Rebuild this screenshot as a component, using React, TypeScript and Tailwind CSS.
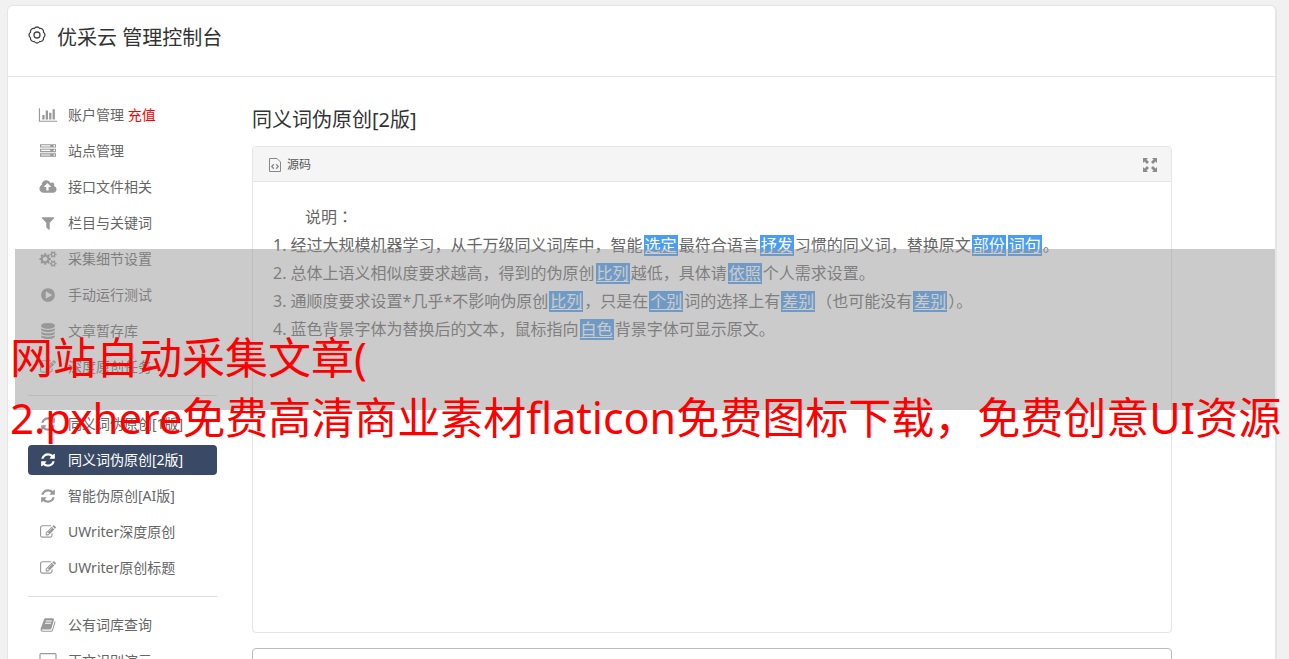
import React from "react";

type IconDef = { w: number; d: string };

const icons: Record<string, IconDef> = {
  chart: { w: 2048, d: "M640 896v512h-256v-512h256zm384-512v1024h-256v-1024h256zm1024 1152v128h-2048v-1536h128v1408h1920zm-640-896v768h-256v-768h256zm384-384v1152h-256v-1152h256z" },
  server: { w: 1792, d: "M128 1408h1024v-128h-1024v128zm0-512h1024v-128h-1024v128zm1568 448q0-40-28-68t-68-28-68 28-28 68 28 68 68 28 68-28 28-68zm-1568-960h1024v-128h-1024v128zm1568 448q0-40-28-68t-68-28-68 28-28 68 28 68 68 28 68-28 28-68zm0-512q0-40-28-68t-68-28-68 28-28 68 28 68 68 28 68-28 28-68zm96 832v384h-1792v-384h1792zm0-512v384h-1792v-384h1792zm0-512v384h-1792v-384h1792z" },
  cloud: { w: 1920, d: "M1280 864q0-14-9-23l-352-352q-9-9-23-9t-23 9l-351 351q-10 12-10 24 0 14 9 23t23 9h224v352q0 13 9.5 22.5t22.5 9.5h192q13 0 22.5-9.5t9.5-22.5v-352h224q13 0 22.5-9.5t9.5-22.5zm640 288q0 159-112.5 271.5t-271.5 112.5h-1088q-185 0-316.5-131.5t-131.5-316.5q0-130 70-240t188-165q-2-30-2-43 0-212 150-362t362-150q156 0 285.5 87t188.5 231q71-62 166-62 106 0 181 75t75 181q0 76-41 138 130 31 213.5 135.5t83.5 238.5z" },
  filter: { w: 1792, d: "M1595 295q17 41-14 70l-493 493v742q0 42-39 59-13 5-25 5-27 0-45-19l-256-256q-19-19-19-45v-486l-493-493q-31-29-14-70 17-39 59-39h1280q42 0 59 39z" },
  cogs: { w: 1920, d: "M896 896q0-106-75-181t-181-75-181 75-75 181 75 181 181 75 181-75 75-181zm768 512q0-52-38-90t-90-38-90 38-38 90q0 53 37.5 90.5t90.5 37.5 90.5-37.5 37.5-90.5zm0-1024q0-52-38-90t-90-38-90 38-38 90q0 53 37.5 90.5t90.5 37.5 90.5-37.5 37.5-90.5zm-384 421v185q0 10-7 19.5t-16 10.5l-155 24q-11 35-32 76 34 48 90 115 7 11 7 20 0 12-7 19-23 30-82.5 89.5t-78.5 59.5q-11 0-21-7l-115-90q-37 19-77 31-11 108-23 155-7 24-30 24h-186q-11 0-20-7.5t-10-17.5l-23-153q-34-10-75-31l-118 89q-7 7-20 7-11 0-21-8-144-133-144-160 0-9 7-19 10-14 41-53t47-61q-23-44-35-82l-152-24q-10-1-17-9.5t-7-19.5v-185q0-10 7-19.5t16-10.5l155-24q11-35 32-76-34-48-90-115-7-11-7-20 0-12 7-20 22-30 82-89t79-59q11 0 21 7l115 90q34-18 77-32 11-108 23-154 7-24 30-24h186q11 0 20 7.5t10 17.5l23 153q34 10 75 31l118-89q8-7 20-7 11 0 21 8 144 133 144 160 0 8-7 19-12 16-42 54t-45 60q23 48 34 82l152 23q10 2 17 10.5t7 19.5zm640 533v140q0 16-149 31-12 27-30 52 51 113 51 138 0 4-4 7-122 71-124 71-8 0-46-47t-52-68q-20 2-30 2t-30-2q-14 21-52 68t-46 47q-2 0-124-71-4-3-4-7 0-25 51-138-18-25-30-52-149-15-149-31v-140q0-16 149-31 13-29 30-52-51-113-51-138 0-4 4-7 4-2 35-20t59-34 30-16q8 0 46 46.5t52 67.5q20-2 30-2t30 2q51-71 92-112l6-2q4 0 124 70 4 3 4 7 0 25-51 138 17 23 30 52 149 15 149 31zm0-1024v140q0 16-149 31-12 27-30 52 51 113 51 138 0 4-4 7-122 71-124 71-8 0-46-47t-52-68q-20 2-30 2t-30-2q-14 21-52 68t-46 47q-2 0-124-71-4-3-4-7 0-25 51-138-18-25-30-52-149-15-149-31v-140q0-16 149-31 13-29 30-52-51-113-51-138 0-4 4-7 4-2 35-20t59-34 30-16q8 0 46 46.5t52 67.5q20-2 30-2t30 2q51-71 92-112l6-2q4 0 124 70 4 3 4 7 0 25-51 138 17 23 30 52 149 15 149 31z" },
  play: { w: 1792, d: "M896 128q209 0 385.5 103t279.5 279.5 103 385.5-103 385.5-279.5 279.5-385.5 103-385.5-103-279.5-279.5-103-385.5 103-385.5 279.5-279.5 385.5-103zm384 823q32-18 32-55t-32-55l-544-320q-31-19-64-1-32 19-32 56v640q0 37 32 56 16 8 32 8 17 0 32-9z" },
  database: { w: 1792, d: "M896 768q237 0 443-43t325-127v170q0 69-103 128t-280 93.5-385 34.5-385-34.5-280-93.5-103-128v-170q119 84 325 127t443 43zm0 768q237 0 443-43t325-127v170q0 69-103 128t-280 93.5-385 34.5-385-34.5-280-93.5-103-128v-170q119 84 325 127t443 43zm0-384q237 0 443-43t325-127v170q0 69-103 128t-280 93.5-385 34.5-385-34.5-280-93.5-103-128v-170q119 84 325 127t443 43zm0-1152q208 0 385 34.5t280 93.5 103 128v128q0 69-103 128t-280 93.5-385 34.5-385-34.5-280-93.5-103-128v-128q0-69 103-128t280-93.5 385-34.5z" },
  edit: { w: 1792, d: "M888 1184l116-116-152-152-116 116v56h96v96h56zm440-720q-16-16-33 1l-350 350q-17 17-1 33t33-1l350-350q17-17 1-33zm80 594v190q0 119-84.5 203.5t-203.5 84.5h-832q-119 0-203.5-84.5t-84.5-203.5v-832q0-119 84.5-203.5t203.5-84.5h832q63 0 117 25 15 7 18 23 3 17-9 29l-49 49q-14 14-32 8-23-6-45-6h-832q-66 0-113 47t-47 113v832q0 66 47 113t113 47h832q66 0 113-47t47-113v-126q0-13 9-22l64-64q15-15 35-7t20 29zm-96-738l288 288-672 672h-288v-288zm444 132l-92 92-288-288 92-92q28-28 68-28t68 28l152 152q28 28 28 68t-28 68z" },
  refresh: { w: 1792, d: "M1639 1056q0 5-1 7-64 268-268 434.5t-478 166.5q-146 0-282.5-55t-243.5-157l-129 129q-19 19-45 19t-45-19-19-45v-448q0-26 19-45t45-19h448q26 0 45 19t19 45-19 45l-137 137q71 66 161 102t187 36q134 0 250-65t186-179q11-17 53-117 8-23 30-23h192q13 0 22.5 9.5t9.5 22.5zm25-800v448q0 26-19 45t-45 19h-448q-26 0-45-19t-19-45 19-45l138-138q-148-137-349-137-134 0-250 65t-186 179q-11 17-53 117-8 23-30 23h-199q-13 0-22.5-9.5t-9.5-22.5v-7q65-268 270-434.5t480-166.5q146 0 284 55.5t245 156.5l130-129q19-19 45-19t45 19 19 45z" },
  book: { w: 1792, d: "M1703 478q40 57 18 129l-275 906q-19 64-76.5 107.5t-122.5 43.5h-923q-77 0-148.5-53.5t-99.5-131.5q-24-67-2-127 0-4 3-27t4-37q1-8-3-21.5t-3-19.5q2-11 8-21t16.5-23.5 16.5-23.5q23-38 45-91.5t30-91.5q3-10 .5-30t-.5-28q3-11 17-28t17-23q21-36 42-92t25-90q1-9-2.5-32t.5-28q4-13 22-30.5t22-22.5q19-26 42.5-84.5t27.5-96.5q1-8-3-25.5t-2-26.5q2-8 9-18t18-23 17-21q8-12 16.5-30.5t15-35 16-36 19.5-32 26.5-23.5 36-11.5 47.5 5.5l-1 3q38-9 51-9h761q74 0 114 56t18 130l-274 906q-36 119-71.5 153.5t-128.5 34.5h-869q-27 0-38 15-11 16-1 43 24 70 144 70h923q29 0 56-15.5t35-41.5l300-987q7-22 5-57 38 15 59 43zm-1064 2q-4 13 2 22.5t20 9.5h608q13 0 25.5-9.5t16.5-22.5l21-64q4-13-2-22.5t-20-9.5h-608q-13 0-25.5 9.5t-16.5 22.5zm-83 256q-4 13 2 22.5t20 9.5h608q13 0 25.5-9.5t16.5-22.5l21-64q4-13-2-22.5t-20-9.5h-608q-13 0-25.5 9.5t-16.5 22.5z" },
  desktop: { w: 1920, d: "M1792 992v-832q0-13-9.5-22.5t-22.5-9.5h-1600q-13 0-22.5 9.5t-9.5 22.5v832q0 13 9.5 22.5t22.5 9.5h1600q13 0 22.5-9.5t9.5-22.5zm128-832v1088q0 66-47 113t-113 47h-544q0 37 16 77.5t32 71 16 43.5q0 26-19 45t-45 19h-512q-26 0-45-19t-19-45q0-14 16-44t32-70 16-78h-544q-66 0-113-47t-47-113v-1088q0-66 47-113t113-47h1600q66 0 113 47t47 113z" },
};

function Icon({ name }: { name: string }) {
  const icon = icons[name];
  return (
    <svg viewBox={`0 0 ${icon.w} 1792`} className="h-4 w-5 shrink-0 fill-current" aria-hidden="true">
      <path d={icon.d} />
    </svg>
  );
}

type Item = { icon: string; label: string; extra?: string; active?: boolean };

const groups: Item[][] = [
  [
    { icon: "chart", label: "账户管理", extra: "充值" },
    { icon: "server", label: "站点管理" },
    { icon: "cloud", label: "接口文件相关" },
    { icon: "filter", label: "栏目与关键词" },
    { icon: "cogs", label: "采集细节设置" },
    { icon: "play", label: "手动运行测试" },
    { icon: "database", label: "文章暂存库" },
    { icon: "edit", label: "深度原创任务" },
  ],
  [
    { icon: "refresh", label: "同义词伪原创[1版]" },
    { icon: "refresh", label: "同义词伪原创[2版]", active: true },
    { icon: "refresh", label: "智能伪原创[AI版]" },
    { icon: "edit", label: "UWriter深度原创" },
    { icon: "edit", label: "UWriter原创标题" },
  ],
  [
    { icon: "book", label: "公有词库查询" },
    { icon: "desktop", label: "正文识别演示" },
  ],
];

function NavItem({ item }: { item: Item }) {
  return (
    <li>
      <a
        href="#"
        className={
          item.active
            ? "flex h-[30px] items-center gap-2.5 rounded bg-[#3a4a66] px-2.5 text-white"
            : "flex h-[30px] items-center gap-2.5 rounded px-2.5 text-[#666]"
        }
      >
        <span className={item.active ? "flex text-white" : "flex text-[#999]"}>
          <Icon name={item.icon} />
        </span>
        <span className="whitespace-nowrap">
          {item.label}
          {item.extra && <span className="text-[#f00]"> {item.extra}</span>}
        </span>
      </a>
    </li>
  );
}

function Swapped({ children }: { children: React.ReactNode }) {
  return (
    <span className="mx-px inline-block h-[21px] bg-[#499df5] px-px leading-[21px] text-white underline underline-offset-2">
      {children}
    </span>
  );
}

export default function App() {
  return (
    <div className="relative h-screen overflow-hidden bg-[#f1f1f1] pt-[5px] pr-3 pl-[7px] font-['Noto_Sans','Noto_Sans_CJK_SC',sans-serif] text-sm text-[#666]">
      <div className="min-h-full rounded-t-md border border-r-2 border-[#e5e5e5] bg-white">
        <header className="flex h-[71px] items-start gap-[11px] border-b border-[#e5e5e5] px-5 pt-[17px]">
          <svg viewBox="0 0 18 18" className="mt-[3px] size-[18px] fill-none stroke-[#444]" strokeWidth="1.3" strokeLinejoin="round" aria-hidden="true">
            <path d="M15.500 11.700A3.200 3.200 0 0 1 11.700 15.500A3.200 3.200 0 0 1 6.300 15.500A3.200 3.200 0 0 1 2.500 11.700A3.200 3.200 0 0 1 2.500 6.300A3.200 3.200 0 0 1 6.300 2.500A3.200 3.200 0 0 1 11.700 2.500A3.200 3.200 0 0 1 15.500 6.300A3.200 3.200 0 0 1 15.500 11.700Z" />
            <circle cx="9" cy="9" r="3" />
          </svg>
          <h1 className="text-xl leading-[30px] text-[#333]">优采云 管理控制台</h1>
        </header>

        <div className="flex gap-[35px] px-5">
          <nav className="w-[189px] shrink-0 pt-[23px]">
            {groups.map((group, i) => (
              <ul
                key={i}
                className={
                  i === 0
                    ? "flex flex-col gap-1.5"
                    : "mt-[13px] flex flex-col gap-1.5 border-t border-[#ddd] pt-[13px]"
                }
              >
                {group.map((item) => (
                  <NavItem key={item.label} item={item} />
                ))}
              </ul>
            ))}
          </nav>

          <main className="mr-[83px] min-w-0 flex-1 pt-7">
            <h2 className="text-xl leading-[30px] text-[#333]">同义词伪原创[2版]</h2>
            <section className="mt-[11px] rounded border border-[#e5e5e5]">
              <div className="flex h-[35px] items-center justify-between rounded-t border-b border-[#e5e5e5] bg-[#f5f5f5] pt-0.5 pr-3.5 pl-4 text-xs text-[#555]">
                <button type="button" className="flex items-center gap-1.5">
                  <svg viewBox="0 0 12 14" className="h-3.5 w-3 fill-none stroke-[#888]" aria-hidden="true">
                    <path d="M.5.5h7.500l3.500 3.500v9.500h-11z" />
                    <path strokeWidth="1.300" d="M4.800 6.300l-2 2.200 2 2.200M7.200 6.300l2 2.200-2 2.200" />
                  </svg>
                  源码
                </button>
                <button type="button" aria-label="全屏" className="text-[#8c8c8c]">
                  <svg viewBox="0 0 14 14" className="size-3.5 fill-current" aria-hidden="true">
                    <path d="M0 0h5L3.500 1.500 6 4 4 6 1.500 3.500 0 5zM14 0v5l-1.500-1.500L10 6 8 4l2.500-2.500L9 0zM0 14V9l1.500 1.500L4 8l2 2-2.500 2.500L5 14zM14 14H9l1.500-1.500L8 10l2-2 2.500 2.500L14 9z" />
                  </svg>
                </button>
              </div>
              <div className="h-[450px] px-5 pt-5 text-base leading-7">
                <p className="indent-8">
                  说明<span className="font-['Noto_Sans_CJK_TC',sans-serif]">：</span>
                </p>
                <ol>
                  <li>1. 经过大规模机器学习，从千万级同义词库中，智能<Swapped>选定</Swapped>最符合语言<Swapped>抒发</Swapped>习惯的同义词，替换原文<Swapped>部份</Swapped><Swapped>词句</Swapped>。</li>
                  <li>2. 总体上语义相似度要求越高，得到的伪原创<Swapped>比列</Swapped>越低，具体请<Swapped>依照</Swapped>个人需求设置。</li>
                  <li>3. 通顺度要求设置*几乎*不影响伪原创<Swapped>比列</Swapped>，只是在<Swapped>个别</Swapped>词的选择上有<Swapped>差别</Swapped>（也可能没有<Swapped>差别</Swapped>）。</li>
                  <li>4. 蓝色背景字体为替换后的文本，鼠标指向<Swapped>白色</Swapped>背景字体可显示原文。</li>
                </ol>
              </div>
            </section>
            <section className="mt-[15px] h-20 rounded border border-[#bbb]" />
          </main>
        </div>
      </div>

      <div className="absolute top-[249px] right-3.5 left-[15px] h-[161px] bg-[#979797]/50" />
      <div className="absolute top-[328px] left-2.5 text-[43px] leading-[60px] whitespace-nowrap text-[#f00]">
        <p>网站自动采集文章(</p>
        <p>
          <span className="text-[42px]">2.pxhere</span>免费高清商业素材flaticon免费图标下载，免费创意UI资源
        </p>
      </div>
    </div>
  );
}
